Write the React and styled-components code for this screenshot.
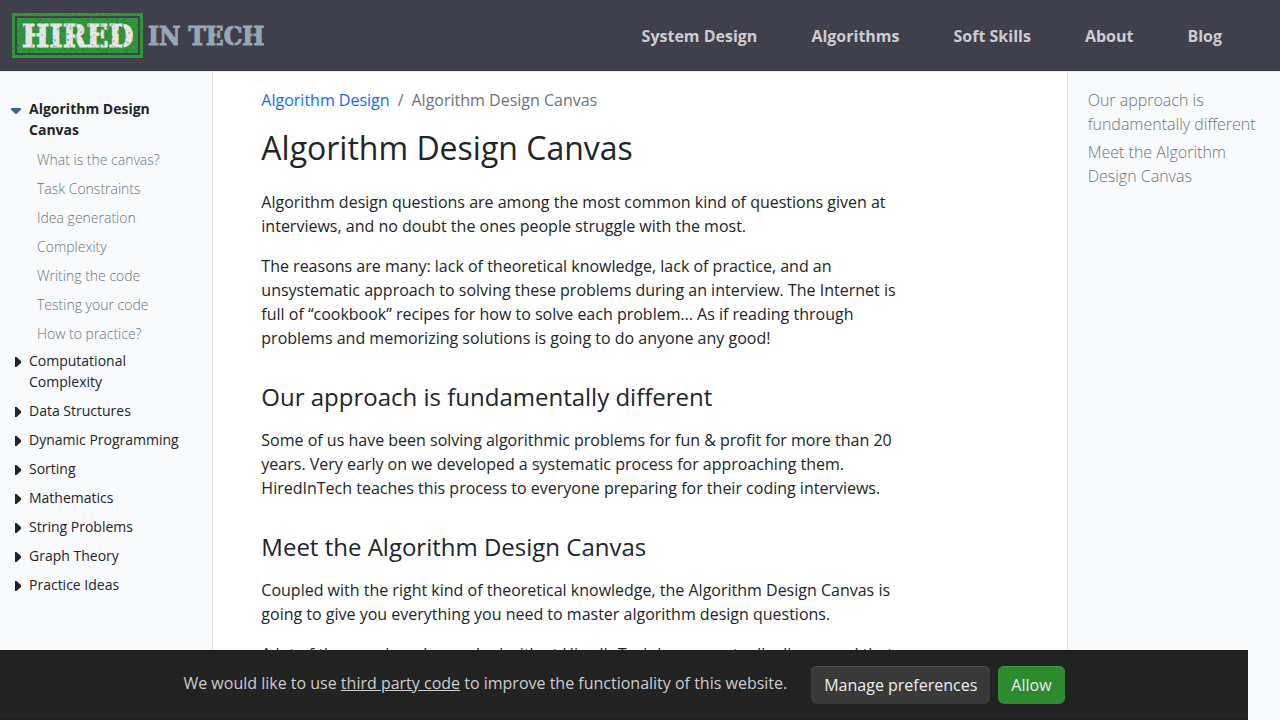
import React from "react";
import styled, { createGlobalStyle } from "styled-components";

const Global = createGlobalStyle`
  *, *::before, *::after { box-sizing: border-box; }
  html { overflow: hidden; }
  body {
    margin: 0;
    background: #fff;
    color: #212529;
    font: 400 16px/24px "Open Sans", "Noto Sans", sans-serif;
  }
  h1, h2, p, ul, ol { margin: 0; padding: 0; }
  ul, ol { list-style: none; }
  a { color: inherit; text-decoration: none; }
`;

const Page = styled.div`
  display: flex;
  flex-direction: column;
  height: 100vh;
`;

const Header = styled.header`
  display: flex;
  align-items: center;
  justify-content: space-between;
  flex: none;
  height: 71px;
  padding: 0 58px 0 12px;
  background: #403f4c;
`;

const LogoLink = styled.a`
  display: block;
  svg { display: block; }
`;

const LogoText = styled.text`
  font-family: "DejaVu Serif Condensed", "DejaVu Serif", serif;
  font-weight: 700;
`;

const MainNav = styled.nav`
  display: flex;
  gap: 54px;
  color: #cccccf;
  font-weight: 700;
`;

const Columns = styled.div`
  display: grid;
  grid-template-columns: 1fr 4fr 1fr;
  flex: 1;
  min-height: 0;
  border-top: 1px solid #e6e4ec;
`;

const Sidebar = styled.aside`
  padding: 26px 12px 0;
  background: #f9fafc;
  border-right: 1px solid #dee2e6;
  font-size: 14px;
  line-height: 21px;
`;

const Tree = styled.ul`
  display: flex;
  flex-direction: column;
  gap: 8px;
`;

const Toggle = styled.button`
  display: flex;
  align-items: flex-start;
  width: 100%;
  padding: 0 16px 0 0;
  border: 0;
  background: none;
  color: #212529;
  font: inherit;
  font-weight: ${(p) => (p.$open ? 700 : 400)};
  text-align: left;
`;

const Caret = styled.svg`
  flex: none;
  width: 9px;
  height: 21px;
  margin: 0 5px 0 3px;
  overflow: visible;
`;

const SubList = styled(Tree)`
  padding: 9px 0 0 25px;
  margin-bottom: -2px;
  color: #6c757d;
  font-weight: 300;
`;

const Article = styled.main`
  padding: 16px 12px 0 48px;
  overflow: hidden;
`;

const Breadcrumb = styled.ol`
  display: flex;
  gap: 8px;
  margin-bottom: 16px;
  color: #6c757d;
  a { color: #0d6efd; }
`;

const Title = styled.h1`
  margin-bottom: 22px;
  font-size: 32px;
  font-weight: 400;
  line-height: 40px;
`;

const Heading = styled.h2`
  margin: 33px 0 17px;
  font-size: 24px;
  font-weight: 400;
  line-height: 28px;
`;

const Text = styled.p`
  max-width: 80%;
  margin-bottom: 16px;
`;

const Toc = styled.nav`
  padding: 16px 16px 0 20px;
  background: #f9fafc;
  border-left: 1px solid #dee2e6;
  color: #6c757d;
  font-weight: 300;
  li { margin-bottom: 4px; }
`;

const Consent = styled.section`
  position: fixed;
  left: 0;
  right: 32px;
  bottom: 0;
  display: flex;
  align-items: center;
  justify-content: center;
  height: 70px;
  background: #222;
  box-shadow: inset 0 -1px 0 #23191f;
  color: #ccc;
  p { margin-right: 24px; padding-bottom: 4px; }
  p a { text-decoration: underline; }
`;

const ConsentButton = styled.button`
  height: 38px;
  margin-right: 8px;
  padding: 0 13px;
  border: 0;
  border-radius: 6px;
  background: ${(p) => (p.$primary ? "#2d8a2d" : "#393939")};
  color: #eee;
  font: inherit;
  box-shadow: inset 0 1px 0 ${(p) => (p.$primary ? "#3f9a3f" : "#505050")};
  &:last-child { margin-right: 0; }
`;

const topics = [
  {
    name: "Algorithm Design Canvas",
    children: ["What is the canvas?", "Task Constraints", "Idea generation", "Complexity", "Writing the code", "Testing your code", "How to practice?"],
  },
  { name: "Computational Complexity" },
  { name: "Data Structures" },
  { name: "Dynamic Programming" },
  { name: "Sorting" },
  { name: "Mathematics" },
  { name: "String Problems" },
  { name: "Graph Theory" },
  { name: "Practice Ideas" },
];

// Worn-ink specks scattered over the stamp with a fixed seed.
const specks = (() => {
  let seed = 7;
  const next = () => {
    seed = (seed * 16807) % 2147483647;
    return seed / 2147483647;
  };
  return Array.from({ length: 420 }, () => ({
    x: Math.floor(next() * 130),
    y: Math.floor(next() * 44),
    r: 0.4 + next() * 0.6,
    o: 0.12 + next() * 0.38,
  }));
})();

function Logo() {
  return (
    <svg width="252" height="46" viewBox="0 0 252 46" role="img" aria-label="Hired in Tech">
      <rect width="131" height="45" fill="#30963a" />
      <rect x="4" y="4" width="123" height="37" fill="none" stroke="#3c464a" strokeWidth="2" />
      <LogoText x="10" y="34" fontSize="32" fill="#e6e6e9" stroke="#e6e6e9" strokeWidth="1">HIRED</LogoText>
      <path d="M24 9v27M64 9v27M88 9v27M111 9v27" stroke="#30963a" strokeWidth="1" />
      {specks.map((s, i) => <circle key={i} cx={s.x} cy={s.y} r={s.r} fill="#3f4a4c" opacity={s.o} />)}
      <LogoText x="136" y="32" fontSize="26" fill="#97a5b5" stroke="#97a5b5" strokeWidth="1">IN TECH</LogoText>
      <path d="M204 11v23M222 11v23M241 11v23" stroke="#403f4c" strokeWidth="1" />
    </svg>
  );
}

function Topic({ name, children }) {
  return (
    <li>
      <Toggle $open={!!children} aria-expanded={!!children}>
        <Caret viewBox="0 0 9 21" aria-hidden="true">
          {children
            ? <path d="M-4 10h10v1.500l-4 4q-1 1-2 0l-4-4z" fill="#336699" />
            : <path d="M0 7h1.500l4.500 4v2l-4.500 4h-1.500z" fill="#212529" />}
        </Caret>
        <span>{name}</span>
      </Toggle>
      {children && (
        <SubList>
          {children.map((c) => <li key={c}><a href="#topic">{c}</a></li>)}
        </SubList>
      )}
    </li>
  );
}

export default function App() {
  return (
    <>
      <Global />
      <Page>
        <Header>
          <LogoLink href="#home"><Logo /></LogoLink>
          <MainNav>
            {["System Design", "Algorithms", "Soft Skills", "About", "Blog"].map((n) => <a key={n} href="#nav">{n}</a>)}
          </MainNav>
        </Header>
        <Columns>
          <Sidebar>
            <Tree>{topics.map((t) => <Topic key={t.name} name={t.name}>{t.children}</Topic>)}</Tree>
          </Sidebar>
          <Article>
            <Breadcrumb>
              <li><a href="#design">Algorithm Design</a></li>
              <li aria-hidden="true">/</li>
              <li>Algorithm Design Canvas</li>
            </Breadcrumb>
            <Title>Algorithm Design Canvas</Title>
            <Text>Algorithm design questions are among the most common kind of questions given at interviews, and no doubt the ones people struggle with the most.</Text>
            <Text>The reasons are many: lack of theoretical knowledge, lack of practice, and an unsystematic approach to solving these problems during an interview. The Internet is full of “cookbook” recipes for how to solve each problem… As if reading through problems and memorizing solutions is going to do anyone any good!</Text>
            <Heading id="approach">Our approach is fundamentally different</Heading>
            <Text>Some of us have been solving algorithmic problems for fun &amp; profit for more than 20 years. Very early on we developed a systematic process for approaching them. HiredInTech teaches this process to everyone preparing for their coding interviews.</Text>
            <Heading id="canvas">Meet the Algorithm Design Canvas</Heading>
            <Text>Coupled with the right kind of theoretical knowledge, the Algorithm Design Canvas is going to give you everything you need to master algorithm design questions.</Text>
            <Text>A lot of the people we’ve worked with at HiredInTech have eventually discovered that</Text>
          </Article>
          <Toc>
            <ul>
              <li><a href="#approach">Our approach is fundamentally different</a></li>
              <li><a href="#canvas">Meet the Algorithm Design Canvas</a></li>
            </ul>
          </Toc>
        </Columns>
      </Page>
      <Consent aria-label="Privacy">
        <p>We would like to use <a href="#code">third party code</a> to improve the functionality of this website.</p>
        <ConsentButton>Manage preferences</ConsentButton>
        <ConsentButton $primary>Allow</ConsentButton>
      </Consent>
    </>
  );
}
